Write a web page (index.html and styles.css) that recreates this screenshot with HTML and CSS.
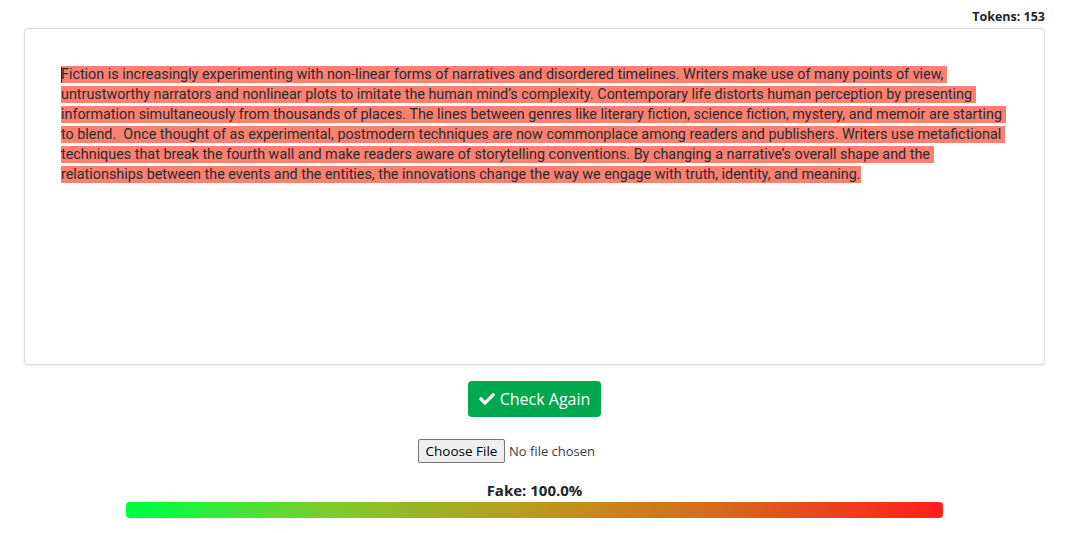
FILE: index.html
```html
<!DOCTYPE html>
<html>
<head>
<meta charset="utf-8">
<link rel="stylesheet" href="styles.css">
</head>
<body>
<div class="page">
  <div class="tokens">Tokens: 153</div>
  <div class="card">
    <div class="editor"><span class="caret"></span><span class="hl">Fiction is increasingly experimenting with non-linear forms of narratives and disordered timelines. Writers make use of many points of view, untrustworthy narrators and nonlinear plots to imitate the human mind’s complexity. Contemporary life distorts human perception by presenting information simultaneously from thousands of places. The lines between genres like literary fiction, science fiction, mystery, and memoir are starting to blend.  Once thought of as experimental, postmodern techniques are now commonplace among readers and publishers. Writers use metafictional techniques that break the fourth wall and make readers aware of storytelling conventions. By changing a narrative’s overall shape and the relationships between the events and the entities, the innovations change the way we engage with truth, identity, and meaning.</span></div>
  </div>
  <div class="actions">
    <button class="btn-check"><svg class="icon" viewBox="0 0 512 512"><path fill="#fff" d="M173.898 439.404l-166.4-166.4c-9.997-9.997-9.997-26.206 0-36.204l36.203-36.204c9.997-9.998 26.207-9.998 36.204 0L192 312.69 432.095 72.596c9.997-9.997 26.207-9.997 36.204 0l36.203 36.204c9.997 9.997 9.997 26.206 0 36.204l-294.4 294.401c-9.998 9.997-26.207 9.997-36.204-.001z"/></svg>Check Again</button>
    <div class="file-row">
      <span class="file-btn">Choose File</span><span class="file-text">No file chosen</span>
    </div>
    <div class="result">Fake: 100.0%</div>
    <div class="bar"></div>
  </div>
</div>
</body>
</html>
```
FILE: styles.css
```css
html, body {
  margin: 0;
  padding: 0;
  background: #fff;
}
body {
  font-family: "Open Sans", "Noto Sans", sans-serif;
  color: #212529;
}
.page {
  padding: 8px 24px 0 24px;
  display: flex;
  flex-direction: column;
}
.tokens {
  text-align: right;
  font-size: 12.5px;
  font-weight: 700;
  line-height: 18px;
  height: 18px;
  margin-bottom: 2px;
  color: #212529;
}
.card {
  border: 1px solid #dcdcdc;
  border-radius: 4px;
  box-shadow: 0 1px 3px rgba(0,0,0,0.08);
  padding: 36px 36px 0 36px;
  box-sizing: border-box;
  height: 337px;
}
.editor {
  font-family: Roboto, "Liberation Sans", sans-serif;
  font-size: 14.35px;
  line-height: 20px;
  color: #2b2b33;
  white-space: pre-wrap;
  position: relative;
}
.caret {
  position: absolute;
  left: 0;
  top: 2px;
  width: 1px;
  height: 16px;
  background: #222;
}
.hl {
  background: #fa8072;
}
.actions {
  display: flex;
  flex-direction: column;
  align-items: center;
}
.btn-check {
  margin-top: 16px;
  height: 36px;
  width: 133px;
  border: none;
  border-radius: 4px;
  background: #00a94f;
  color: #fff;
  font-family: "Open Sans", "Noto Sans", sans-serif;
  font-size: 16px;
  display: flex;
  align-items: center;
  justify-content: center;
  gap: 5px;
  padding: 0;
}
.icon {
  width: 16px;
  height: 16px;
}
.file-row {
  margin-top: 22px;
  width: 233px;
  display: flex;
  align-items: center;
  height: 24px;
  font-size: 13.5px;
  font-family: "Open Sans", "Noto Sans", sans-serif;
}
.file-btn {
  box-sizing: border-box;
  height: 24px;
  width: 87px;
  justify-content: center;
  display: flex;
  align-items: center;
  background: #efefef;
  border: 1px solid #767676;
  border-radius: 2px;
  color: #000;
  font-size: 13.5px;
}
.file-text {
  margin-left: 4px;
  color: #3c3c3c;
  font-size: 13px;
}
.result {
  margin-top: 18px;
  font-size: 15px;
  font-weight: 700;
  line-height: 18px;
  color: #212529;
}
.bar {
  margin-top: 3px;
  width: 817px;
  height: 16px;
  border-radius: 4px;
  background: linear-gradient(to right, #00ff40 0%, #00ff40 2%, #7acd2e 24%, #b89e1f 48%, #d8671a 73%, #ff1e1e 100%);
}
```
